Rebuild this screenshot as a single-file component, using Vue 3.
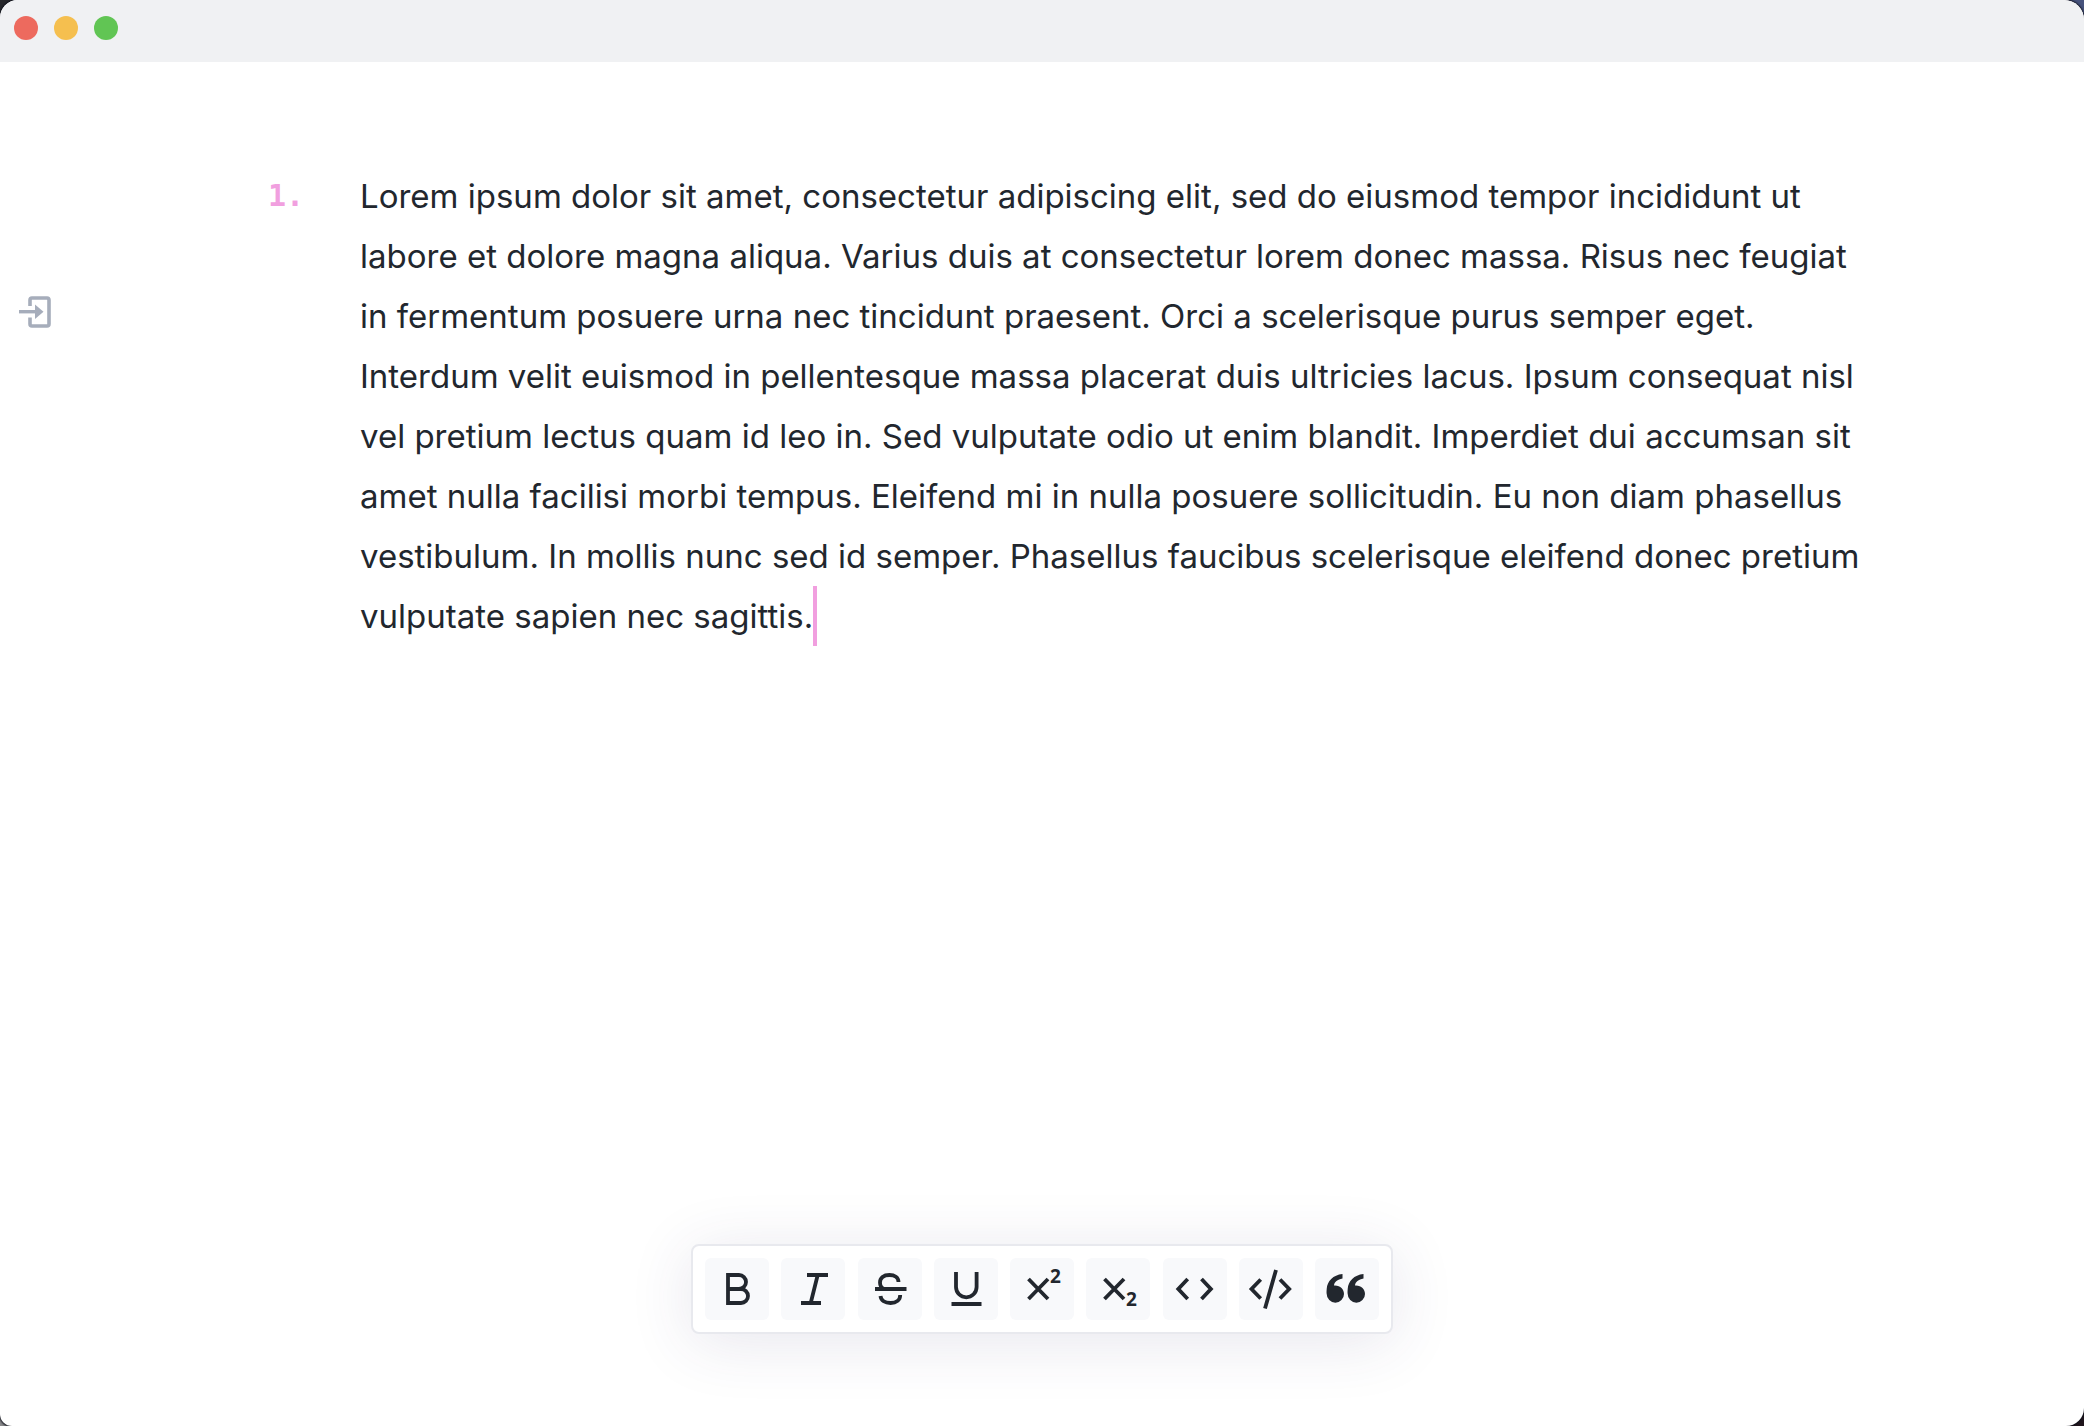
<script setup>
const text =
  'Lorem ipsum dolor sit amet, consectetur adipiscing elit, sed do eiusmod tempor incididunt ut ' +
  'labore et dolore magna aliqua. Varius duis at consectetur lorem donec massa. Risus nec feugiat ' +
  'in fermentum posuere urna nec tincidunt praesent. Orci a scelerisque purus semper eget. ' +
  'Interdum velit euismod in pellentesque massa placerat duis ultricies lacus. Ipsum consequat nisl ' +
  'vel pretium lectus quam id leo in. Sed vulputate odio ut enim blandit. Imperdiet dui accumsan sit ' +
  'amet nulla facilisi morbi tempus. Eleifend mi in nulla posuere sollicitudin. Eu non diam phasellus ' +
  'vestibulum. In mollis nunc sed id semper. Phasellus faucibus scelerisque eleifend donec pretium ' +
  'vulputate sapien nec sagittis.'

const quote = 'M19.5 9v4.5C14.5 14.5 11.3 17 11 20.5 17 20 21 24 21 29a8.6 8.6 0 0 1-17.3 0C3.5 28 3.5 26.5 3.7 24 4.2 16 10 10 19.5 9z'

const tools = [
  { label: 'Bold', stroke: 'M15 10h11a7 7 0 0 1 0 14H15zM15 24h13a7 7 0 0 1 0 14H15z' },
  { label: 'Italic', stroke: 'M18 10h21M12 38h20M28.7 10 21.7 38' },
  { label: 'Strikethrough', stroke: 'M9 24h31.5M32.5 17C32.5 12.5 28.5 10 23.5 10 17.5 10 14 13 14 17.5 14 20.5 15.5 23 18 24M14.5 31C15 35.5 19 38 24.5 38 30.5 38 34.2 35 34.2 30' },
  { label: 'Underline', stroke: 'M14 7v15a10.3 10.3 0 0 0 20.6 0V7M9.5 39h30' },
  { label: 'Superscript', stroke: 'M10.5 14 30 34M30 14 10.5 34', digitY: 18 },
  { label: 'Subscript', stroke: 'M10.5 14 30 34M30 14 10.5 34', digitY: 41 },
  { label: 'Inline code', stroke: 'M16.7 14 7.3 24l9.4 10M30.5 14 39.9 24 30.5 34' },
  { label: 'Code block', stroke: 'M13.7 14.5 4.5 24l9.2 9.5M33 14.5 42.2 24 33 33.5M29 5 18 43.5' },
  { label: 'Quote', fill: quote },
]
</script>

<template>
  <div class="desktop">
    <div class="window">
      <header class="titlebar">
        <button class="light close" type="button" aria-label="Close"></button>
        <button class="light minimize" type="button" aria-label="Minimize"></button>
        <button class="light zoom" type="button" aria-label="Zoom"></button>
      </header>

      <div class="workspace">
        <aside class="rail">
          <button class="panel-toggle" type="button" aria-label="Open sidebar">
            <svg width="32" height="32" viewBox="0 0 32 32" fill="none" stroke="currentColor">
              <path d="M11 10V4a2 2 0 0 1 2-2h15a2 2 0 0 1 2 2v24a2 2 0 0 1-2 2H13a2 2 0 0 1-2-2v-6.500" stroke-width="3.600" />
              <path d="M0 15.700h18" stroke-width="3.400" />
              <path d="M16 8.500v14.400l8.500-7.200z" fill="currentColor" stroke="none" />
            </svg>
          </button>
        </aside>

        <main class="editor">
          <span class="number">1.</span>
          <p class="paragraph">{{ text }}<span class="caret"></span></p>
        </main>
      </div>

      <div class="toolbar" role="toolbar" aria-label="Formatting">
        <button v-for="tool in tools" :key="tool.label" class="tool" type="button" :aria-label="tool.label">
          <svg width="64" height="62" viewBox="-8 -7 64 62">
            <path v-if="tool.stroke" :d="tool.stroke" fill="none" stroke="currentColor" stroke-width="3.800" />
            <text v-if="tool.digitY" x="32" :y="tool.digitY" class="digit">2</text>
            <template v-if="tool.fill">
              <path :d="tool.fill" fill="currentColor" />
              <path :d="tool.fill" fill="currentColor" transform="translate(21 0)" />
            </template>
          </svg>
        </button>
      </div>
    </div>
  </div>
</template>

<style>
body {
  margin: 0;
}
</style>

<style scoped>
.desktop {
  background: conic-gradient(#46527c 25%, #20151c 0 50%, #8a8a8c 0 75%, #26272b 0);
}

.window {
  display: flex;
  flex-direction: column;
  min-height: 100vh;
  border-radius: 18px 20px 18px 12px;
  background: #fff;
  box-shadow: 0 0 2px 1px #10121c;
  overflow: hidden;
}

.titlebar {
  display: flex;
  gap: 16px;
  box-sizing: border-box;
  height: 62px;
  padding: 16px 14px;
  background: #f0f1f3;
}

.light {
  width: 24px;
  height: 24px;
  padding: 0;
  border: 0;
  border-radius: 50%;
}

.close {
  background: #ed6a5e;
}

.minimize {
  background: #f5bf4f;
}

.zoom {
  background: #61c554;
}

.workspace {
  display: flex;
}

.rail {
  width: 268px;
  flex: none;
  padding: 234px 0 0 19px;
  box-sizing: border-box;
}

.panel-toggle {
  display: block;
  padding: 0;
  border: 0;
  background: none;
  color: #a6adbb;
}

.panel-toggle svg {
  display: block;
}

.editor {
  display: flex;
  flex: 1;
  padding: 104px 220px 80px 0;
}

.number {
  flex: none;
  width: 92px;
  color: #f19fdf;
  font: bold 30px/60px "DejaVu Sans Mono", monospace;
}

.paragraph {
  flex: 1;
  margin: 0;
  color: #22272e;
  font: 33px/60px Inter, "Liberation Sans", sans-serif;
}

.caret {
  display: inline-block;
  width: 4px;
  height: 60px;
  background: #f19fdf;
  vertical-align: top;
}

.toolbar {
  display: flex;
  justify-content: space-between;
  box-sizing: border-box;
  width: 702px;
  margin: auto auto 92px;
  padding: 12px;
  border: 2px solid #e8e9ee;
  border-radius: 8px;
  background: #fff;
  box-shadow: 0 8px 64px rgba(60, 50, 110, 0.12);
}

.tool {
  display: grid;
  place-items: center;
  width: 64px;
  height: 62px;
  padding: 0;
  border: 0;
  border-radius: 6px;
  background: #f8f9fb;
  color: #22272e;
}

.digit {
  fill: currentColor;
  font: bold 19px "Noto Sans", sans-serif;
}
</style>
